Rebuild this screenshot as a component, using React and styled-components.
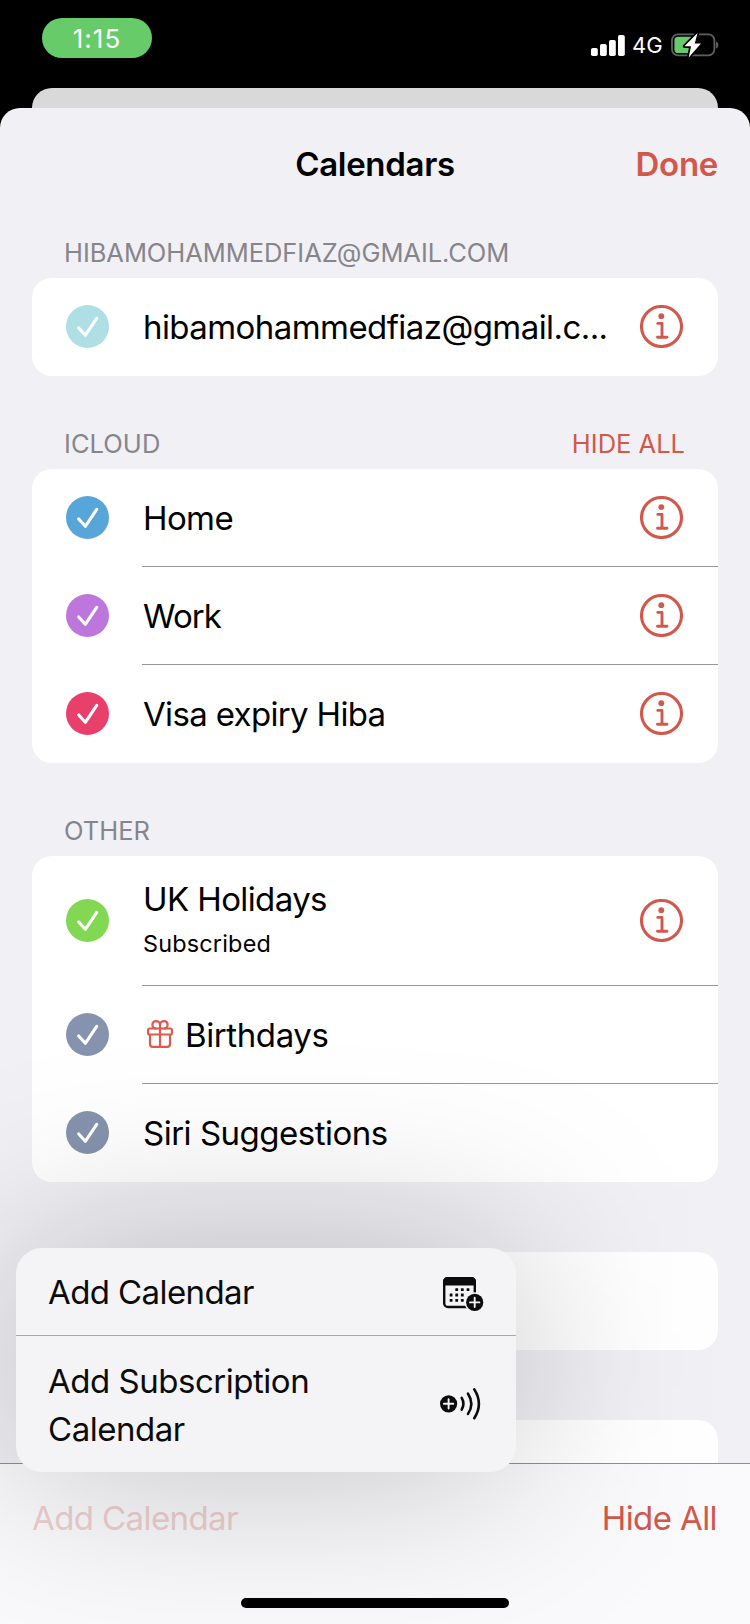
import React from "react";
import styled, { createGlobalStyle } from "styled-components";

const GlobalStyle = createGlobalStyle`
  *, *::before, *::after { box-sizing: border-box; }
  body {
    margin: 0;
    background: #000;
    font-family: Inter, "Liberation Sans", sans-serif;
  }
`;

const RED = "#d1584b";

const Phone = styled.div`
  position: relative;
  width: 750px;
  height: 1624px;
  overflow: hidden;
  display: flex;
  flex-direction: column;
  background: #000;
  color: #000;
`;

const StatusBar = styled.header`
  height: 88px;
  flex: none;
  display: flex;
  justify-content: space-between;
  align-items: flex-start;
  padding: 18px 31px 0 42px;
`;

const TimePill = styled.div`
  width: 110px;
  height: 40px;
  border-radius: 20px;
  background: #66cb68;
  color: #fff;
  font-size: 26px;
  font-weight: 400;
  line-height: 41px;
  text-align: center;
  letter-spacing: 1px;
`;

const StatusIcons = styled.div`
  display: flex;
  align-items: center;
  gap: 8px;
  margin-top: 13px;
  height: 28px;
`;

const Network = styled.span`
  color: #fff;
  font-size: 22px;
  line-height: 29px;
  width: 30px;
  margin-left: -1px;
  margin-right: 1px;
`;

const BackSheet = styled.div`
  height: 20px;
  flex: none;
  margin: 0 32px;
  border-radius: 20px 20px 0 0;
  background: #d9d9d9;
`;

const Sheet = styled.main`
  flex: 1;
  min-height: 0;
  display: flex;
  flex-direction: column;
  border-radius: 20px 20px 0 0;
  background: #f1f0f5;
  overflow: hidden;
`;

const NavBar = styled.div`
  flex: none;
  height: 77px;
  padding: 35px 32px 0 32px;
  display: grid;
  grid-template-columns: 1fr auto 1fr;
  font-size: 33px;
  line-height: 42px;
  font-weight: 600;
`;

const Title = styled.h1`
  grid-column: 2;
  margin: 0;
  font: inherit;
  letter-spacing: -0.3px;
`;

const DoneButton = styled.button`
  justify-self: end;
  border: 0;
  padding: 0;
  background: none;
  font: inherit;
  color: ${RED};
  letter-spacing: -0.3px;
`;

const List = styled.div`
  flex: 1;
  min-height: 0;
  overflow: hidden;
  padding: 0 32px;
`;

const SectionHeader = styled.div`
  height: ${(p) => (p.$empty ? 70 : 93)}px;
  display: flex;
  justify-content: space-between;
  align-items: flex-end;
  padding: 0 33px 9px 32px;
  font-size: 25.5px;
  line-height: 32px;
  color: #85858b;
  letter-spacing: ${(p) => p.$tracking ?? 0}px;
`;

const HideSection = styled.span`
  color: ${RED};
  letter-spacing: 0;
`;

const Card = styled.section`
  min-height: 98px;
  border-radius: 20px;
  background: #fff;
  overflow: hidden;
`;

const Row = styled.div`
  height: ${(p) => (p.$tall ? 130 : 98)}px;
  padding-left: 34px;
  display: flex;
  align-items: center;
  gap: 33px;
`;

const RowBody = styled.div`
  flex: 1;
  min-width: 0;
  height: 100%;
  display: flex;
  align-items: center;
  padding: 0 35px 0 1px;
  border-bottom: 1px solid ${(p) => (p.$last ? "transparent" : "#96969b")};
`;

const Labels = styled.div`
  flex: 1;
  min-width: 0;
  display: flex;
  flex-direction: column;
  gap: 3px;
  padding-top: ${(p) => (p.$tall ? 0 : 1)}px;
`;

const Name = styled.span`
  font-size: 33px;
  line-height: 44px;
  white-space: nowrap;
  letter-spacing: ${(p) => p.$tracking}px;
`;

const Detail = styled.span`
  font-size: 23.4px;
  line-height: 40px;
  letter-spacing: 0.2px;
`;

const GiftSlot = styled.span`
  display: flex;
  margin: 0 12px 2px 4px;
`;

const Toolbar = styled.footer`
  flex: none;
  height: 161px;
  padding: 33px 33px 16px 32px;
  border-top: 1px solid #8f8e96;
  background: #fafafc;
  display: flex;
  flex-direction: column;
  justify-content: space-between;
`;

const ToolbarActions = styled.div`
  display: flex;
  justify-content: space-between;
  font-size: 33px;
  line-height: 43px;
`;

const ToolbarButton = styled.button`
  border: 0;
  padding: 0;
  background: none;
  font: inherit;
  color: ${(p) => (p.$faded ? "#edd0cf" : RED)};
  letter-spacing: ${(p) => p.$tracking}px;
`;

const HomeIndicator = styled.div`
  align-self: center;
  width: 268px;
  height: 10px;
  border-radius: 5px;
  background: #000;
`;

const MenuLayer = styled.div`
  position: absolute;
  left: 16px;
  top: 1248px;
  width: 500px;
  height: 224px;

  &::before {
    content: "";
    position: absolute;
    inset: 0;
    border-radius: 26px;
    background: rgba(0, 0, 0, 0.235);
    filter: blur(95px);
  }
`;

const Menu = styled.div`
  position: relative;
  height: 100%;
  border-radius: 26px;
  background: #f4f3f5;
`;

const MenuItem = styled.div`
  display: flex;
  align-items: center;
  justify-content: space-between;
  height: ${(p) => (p.$tall ? 136 : 88)}px;
  padding: ${(p) => (p.$tall ? "0 35px 0 32px" : "0 32px 0 32px")};
  border-bottom: ${(p) => (p.$tall ? "0" : "1px solid #a9a9ad")};
  font-size: 33px;
  line-height: 48px;
  color: #0b0b0c;
`;

const MenuLabel = styled.span`
  width: 300px;
  padding-top: 1px;
  letter-spacing: ${(p) => p.$tracking}px;
`;

const CheckSvg = styled.svg`
  flex: none;
  margin-bottom: 1px;
`;

const CalendarSvg = styled.svg`
  margin-top: 5px;
`;

const Signal = () => (
  <svg width="34" height="22" viewBox="0 0 34 22" fill="#fff">
    <rect x="0" y="14" width="6.800" height="8" rx="1.800" />
    <rect x="9" y="10" width="6.800" height="12" rx="1.800" />
    <rect x="18" y="6" width="6.800" height="16" rx="1.800" />
    <rect x="27" y="1" width="6.800" height="21" rx="1.800" />
  </svg>
);

const Battery = () => (
  <svg width="48" height="26" viewBox="0 0 48 26">
    <rect x="1" y="2.400" width="42.400" height="21" rx="6" fill="none" stroke="#606060" strokeWidth="1.800" />
    <path d="M45 9.400c3 .9 3 6.100 0 7z" fill="#606060" />
    <rect x="3.400" y="4.800" width="20" height="16.200" rx="3.600" fill="#66cb68" />
    <path d="M26.500 1L13.500 14.300H20L17.700 25.400L30 11.500H23.800Z" fill="#fff" stroke="#000" strokeWidth="3.400" strokeLinejoin="round" paintOrder="stroke" />
  </svg>
);

const CheckMark = ({ color }) => (
  <CheckSvg width="43" height="43" viewBox="0 0 43 43">
    <circle cx="21.500" cy="21.500" r="21.500" fill={color} />
    <path d="M12.700 23L19.300 30.300L30.700 13.300" fill="none" stroke="#fff" strokeWidth="3.100" strokeLinecap="round" strokeLinejoin="round" />
  </CheckSvg>
);

const InfoIcon = () => (
  <svg width="43" height="43" viewBox="0 0 43 43" fill="none" stroke={RED} strokeWidth="2.900" strokeLinecap="round" strokeLinejoin="round">
    <circle cx="21.500" cy="21.500" r="20" strokeWidth="3.100" />
    <circle cx="21.300" cy="11.200" r="2.900" fill={RED} stroke="none" />
    <path d="M17.800 18.400H22V32.300M17.500 32.300H27" />
  </svg>
);

const GiftIcon = () => (
  <svg width="26" height="28" viewBox="0 0 26 28" fill="none" stroke="#dc5a50" strokeWidth="2.200" strokeLinejoin="round">
    <rect x="1.100" y="8.500" width="23.800" height="6" rx="1.600" />
    <path d="M3 14.500V24Q3 26.800 5.800 26.800H20.200Q23 26.800 23 24V14.500M13 8.500V27" />
    <path d="M13 8.500V4.900C13 2.600 11.300 1.200 9 1.200C6.900 1.200 5.400 2.600 5.400 4.700C5.400 6.900 7 8.500 9.300 8.500M13 8.500V4.900C13 2.600 14.700 1.200 17 1.200C19.100 1.200 20.600 2.600 20.600 4.700C20.600 6.900 19 8.500 16.700 8.500" />
  </svg>
);

const DOTS = [
  [13.7, 12.7], [19.3, 12.7], [25, 12.7],
  [8.1, 18], [13.7, 18], [19.3, 18],
  [8.1, 23.4], [13.7, 23.4], [19.3, 23.4],
];

const AddCalendarIcon = () => (
  <CalendarSvg width="41" height="35" viewBox="0 0 41 35">
    <rect x="1.200" y="1.200" width="30.600" height="28.800" rx="3.800" fill="none" stroke="#0b0b0c" strokeWidth="2.400" />
    <path d="M0 8.500V5Q0 0 5 0H28Q33 0 33 5V8.500Z" fill="#0b0b0c" />
    {DOTS.map(([x, y]) => (
      <rect key={`${x}-${y}`} x={x - 1.4} y={y - 1.4} width="2.800" height="2.800" rx="0.500" fill="#0b0b0c" />
    ))}
    <circle cx="31.700" cy="25.400" r="10.200" fill="#f4f3f5" />
    <circle cx="31.700" cy="25.400" r="8.600" fill="#0b0b0c" />
    <path d="M31.700 20.700V30.100M27 25.400H36.400" stroke="#f4f3f5" strokeWidth="1.900" strokeLinecap="round" />
  </CalendarSvg>
);

const SubscribeIcon = () => (
  <svg width="41" height="32" viewBox="0 0 41 32" fill="none" stroke="#0b0b0c" strokeWidth="2.600" strokeLinecap="round">
    <circle cx="8.600" cy="15.800" r="8.600" fill="#0b0b0c" stroke="none" />
    <path d="M8.600 11.100V20.500M3.900 15.800H13.300" stroke="#f4f3f5" strokeWidth="1.900" />
    <path d="M21.700 9.900Q25.100 15.800 21.700 21.700" />
    <path d="M28 5.700Q34.700 15.800 28 25.900" />
    <path d="M34.300 1.400Q43.500 15.800 34.300 30.200" />
  </svg>
);

const SECTIONS = [
  {
    label: "HIBAMOHAMMEDFIAZ@GMAIL.COM",
    tracking: -0.05,
    rows: [{ name: "hibamohammedfiaz@gmail.c...", color: "#aedfe4", info: true, tracking: -0.57 }],
  },
  {
    label: "ICLOUD",
    tracking: 0.05,
    action: "HIDE ALL",
    rows: [
      { name: "Home", color: "#58a6d9", info: true, tracking: -0.6 },
      { name: "Work", color: "#bd77dc", info: true, tracking: -0.9 },
      { name: "Visa expiry Hiba", color: "#e9406b", info: true, tracking: -0.66 },
    ],
  },
  {
    label: "OTHER",
    rows: [
      { name: "UK Holidays", detail: "Subscribed", color: "#82d852", info: true, tracking: -0.6 },
      { name: "Birthdays", color: "#8593ae", gift: true, tracking: -0.4 },
      { name: "Siri Suggestions", color: "#8593ae", tracking: -0.5 },
    ],
  },
];

export default function App() {
  return (
    <Phone>
      <GlobalStyle />
      <StatusBar>
        <TimePill>1:15</TimePill>
        <StatusIcons>
          <Signal />
          <Network>4G</Network>
          <Battery />
        </StatusIcons>
      </StatusBar>
      <BackSheet />
      <Sheet>
        <NavBar>
          <Title>Calendars</Title>
          <DoneButton>Done</DoneButton>
        </NavBar>
        <List>
          {SECTIONS.map((section) => (
            <React.Fragment key={section.label}>
              <SectionHeader $tracking={section.tracking}>
                <span>{section.label}</span>
                {section.action && <HideSection>{section.action}</HideSection>}
              </SectionHeader>
              <Card>
                {section.rows.map((row, i) => (
                  <Row key={row.name} $tall={Boolean(row.detail)}>
                    <CheckMark color={row.color} />
                    <RowBody $last={i === section.rows.length - 1}>
                      {row.gift && (
                        <GiftSlot>
                          <GiftIcon />
                        </GiftSlot>
                      )}
                      <Labels $tall={Boolean(row.detail)}>
                        <Name $tracking={row.tracking}>{row.name}</Name>
                        {row.detail && <Detail>{row.detail}</Detail>}
                      </Labels>
                      {row.info && <InfoIcon />}
                    </RowBody>
                  </Row>
                ))}
              </Card>
            </React.Fragment>
          ))}
          <SectionHeader $empty />
          <Card />
          <SectionHeader $empty />
          <Card />
        </List>
        <Toolbar>
          <ToolbarActions>
            <ToolbarButton $faded $tracking={-0.6}>Add Calendar</ToolbarButton>
            <ToolbarButton $tracking={-0.6}>Hide All</ToolbarButton>
          </ToolbarActions>
          <HomeIndicator />
        </Toolbar>
      </Sheet>
      <MenuLayer>
        <Menu>
          <MenuItem>
            <MenuLabel $tracking={-0.6}>Add Calendar</MenuLabel>
            <AddCalendarIcon />
          </MenuItem>
          <MenuItem $tall>
            <MenuLabel $tracking={-0.48}>Add Subscription Calendar</MenuLabel>
            <SubscribeIcon />
          </MenuItem>
        </Menu>
      </MenuLayer>
    </Phone>
  );
}
